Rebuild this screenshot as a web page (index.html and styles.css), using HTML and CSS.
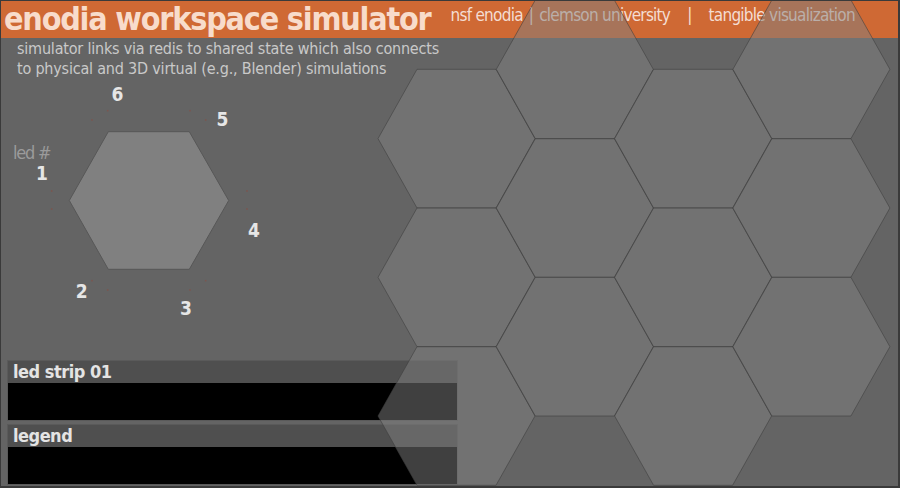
FILE: index.html
```html
<!DOCTYPE html>
<html lang="en">
<head>
<meta charset="utf-8">
<title>enodia workspace simulator</title>
<link rel="stylesheet" href="styles.css">
</head>
<body>
<div class="app">
  <header class="topbar">
    <h1 class="title">enodia workspace simulator</h1>
    <nav class="links">
      <span>nsf enodia</span><span class="sep">|</span><span>clemson university</span><span class="sep wide">|</span><span>tangible visualization</span>
    </nav>
  </header>
  <p class="subtitle">simulator links via redis to shared state which also connects<br>to physical and 3D virtual (e.g., Blender) simulations</p>

  <svg class="led-diagram" viewBox="0 80 300 260" width="300" height="260">
    <polygon class="tile" points="68.3,200.5 107.3,131.7 188.3,131.7 227.7,200.5 188.3,269.3 107.3,269.3"/>
    <g class="dots">
      <circle cx="106.7" cy="110.7" r="0.9"/><circle cx="91" cy="120" r="0.9"/>
      <circle cx="189" cy="110.7" r="0.9"/><circle cx="204.7" cy="120" r="0.9"/>
      <circle cx="246" cy="191" r="0.9"/><circle cx="246" cy="209" r="0.9"/>
      <circle cx="204.7" cy="280.7" r="0.9"/><circle cx="189" cy="290" r="0.9"/>
      <circle cx="91" cy="280.7" r="0.9"/><circle cx="106.7" cy="290" r="0.9"/>
      <circle cx="50.7" cy="191" r="0.9"/><circle cx="50.7" cy="209" r="0.9"/>
    </g>
    <text class="led-caption" x="12" y="159">led #</text>
    <g class="led-num">
      <text x="41" y="180">1</text>
      <text x="80.7" y="298">2</text>
      <text x="185" y="315">3</text>
      <text x="253" y="237">4</text>
      <text x="221.5" y="126">5</text>
      <text x="116.5" y="101">6</text>
    </g>
  </svg>

  <section class="panels">
    <div class="panel">
      <h2 class="panel-head">led strip 01</h2>
      <div class="panel-body"></div>
    </div>
    <div class="panel">
      <h2 class="panel-head">legend</h2>
      <div class="panel-body"></div>
    </div>
  </section>

  <svg class="hex-grid" viewBox="0 0 900 488" width="900" height="488">
    <g class="hex">
      <polygon points="378,138.6 417,69.3 496,69.3 535,138.6 496,208 417,208"/>
      <polygon points="378,277.3 417,208 496,208 535,277.3 496,346.7 417,346.7"/>
      <polygon points="378,416 417,346.7 496,346.7 535,416 496,485.3 417,485.3"/>

      <polygon points="496.3,69.3 535.3,0 614.3,0 653.3,69.3 614.3,138.7 535.3,138.7"/>
      <polygon points="496.3,208 535.3,138.7 614.3,138.7 653.3,208 614.3,277.3 535.3,277.3"/>
      <polygon points="496.3,346.7 535.3,277.3 614.3,277.3 653.3,346.7 614.3,416 535.3,416"/>

      <polygon points="614.6,138.6 653.6,69.3 732.6,69.3 771.6,138.6 732.6,208 653.6,208"/>
      <polygon points="614.6,277.3 653.6,208 732.6,208 771.6,277.3 732.6,346.7 653.6,346.7"/>
      <polygon points="614.6,416 653.6,346.7 732.6,346.7 771.6,416 732.6,485.3 653.6,485.3"/>

      <polygon points="732.9,69.3 771.9,0 850.9,0 889.9,69.3 850.9,138.7 771.9,138.7"/>
      <polygon points="732.9,208 771.9,138.7 850.9,138.7 889.9,208 850.9,277.3 771.9,277.3"/>
      <polygon points="732.9,346.7 771.9,277.3 850.9,277.3 889.9,346.7 850.9,416 771.9,416"/>
    </g>
  </svg>
</div>
</body>
</html>
```
FILE: styles.css
```css
* { box-sizing: border-box; }

html, body {
  margin: 0;
  padding: 0;
  background: #646464;
}

.app {
  position: relative;
  width: 900px;
  height: 488px;
  overflow: hidden;
  background: #646464;
  border: 1px solid #3a3a3a;
  border-right-width: 2px;
  border-bottom-width: 2px;
  display: flex;
  flex-direction: column;
  font-family: "DejaVu Sans Condensed", "DejaVu Sans", sans-serif;
}

.topbar {
  height: 37px;
  flex: none;
  background: #cf6934;
  display: flex;
  align-items: flex-start;
  padding-left: 3px;
  white-space: nowrap;
}

.title {
  margin: 0;
  font-size: 32px;
  font-weight: 700;
  line-height: 37px;
  letter-spacing: -1.2px;
  color: #f8dccb;
}

.links {
  margin-left: 20px;
  padding-top: 4px;
  font-size: 17px;
  font-weight: 400;
  line-height: 20px;
  letter-spacing: -0.75px;
  color: #f4ddd2;
  display: flex;
}

.links .sep { margin: 0 6px; }
.links .sep.wide { margin: 0 17px; }

.subtitle {
  margin: 1px 0 0 16px;
  font-size: 16px;
  font-weight: 400;
  line-height: 20px;
  letter-spacing: -0.2px;
  color: #c9c9c9;
  flex: none;
}

.led-diagram {
  display: block;
  flex: none;
  margin-top: 1px;
}

.led-diagram .tile {
  fill: #808080;
  stroke: #575757;
  stroke-width: 1;
}

.dots circle { fill: #7a5650; }

.led-caption {
  font-size: 18px;
  font-weight: 400;
  letter-spacing: -1.2px;
  fill: #9b9b9b;
}

.led-num text {
  font-size: 19px;
  font-weight: 700;
  fill: #e6e6e6;
  text-anchor: middle;
}

.panels {
  margin: auto 0 1px 6px;
  width: 451px;
  display: flex;
  flex-direction: column;
  gap: 3px;
}

.panel {
  border: 1px solid #5a5a5a;
  display: flex;
  flex-direction: column;
}

.panel-head {
  margin: 0;
  height: 22px;
  padding-left: 5px;
  background: #4f4f4f;
  color: #e4e4e4;
  font-size: 18px;
  font-weight: 700;
  line-height: 22px;
  letter-spacing: -0.5px;
}

.panel-body {
  height: 37px;
  background: #000;
}

.hex-grid {
  position: absolute;
  left: -1px;
  top: -1px;
  pointer-events: none;
}

.hex polygon {
  fill: rgba(128, 128, 128, 0.5);
  stroke: rgba(60, 60, 60, 0.55);
  stroke-width: 1;
}
```
